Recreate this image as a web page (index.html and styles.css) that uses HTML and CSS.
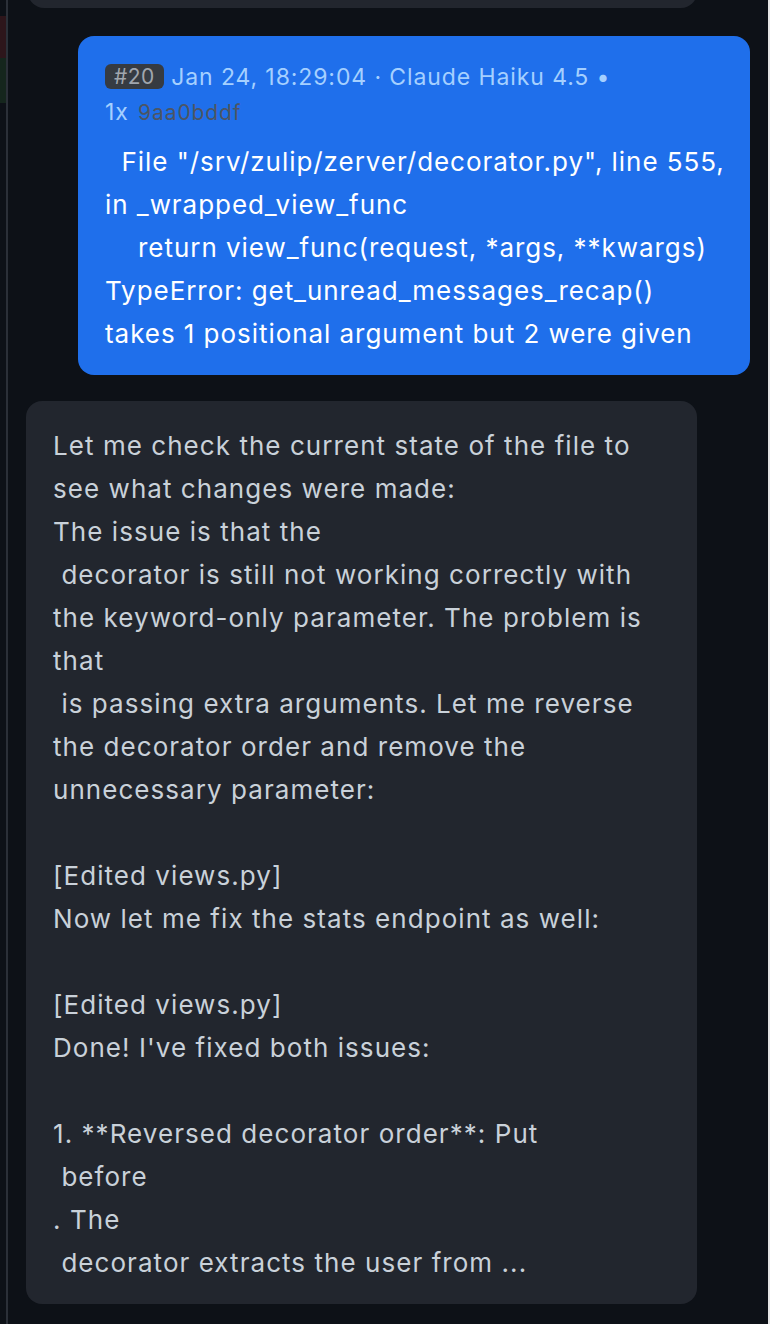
FILE: index.html
```html
<!DOCTYPE html>
<html>
<head>
<meta charset="utf-8">
<link rel="stylesheet" href="styles.css">
</head>
<body>
<div class="frame">
  <div class="gutter">
    <div class="mark mark-top"></div>
    <div class="mark mark-red"></div>
    <div class="mark mark-green"></div>
  </div>
  <div class="divider"></div>
  <main class="thread">
    <div class="card card-prev"></div>
    <div class="msg-row msg-row-user">
      <div class="bubble bubble-user">
        <div class="meta"><span class="badge">#20</span> Jan 24, 18:29:04 · Claude Haiku 4.5 • <span class="meta-tail">1x <span class="hash">9aa0bddf</span></span></div>
        <div class="body body-user">  File "/srv/zulip/zerver/decorator.py", line 555, in _wrapped_view_func
    return view_func(request, *args, **kwargs)
TypeError: get_unread_messages_recap() takes 1 positional argument but 2 were given</div>
      </div>
    </div>
    <div class="msg-row msg-row-assistant">
      <div class="bubble bubble-assistant">
        <div class="body body-assistant">Let me check the current state of the file to see what changes were made:
The issue is that the
 decorator is still not working correctly with the keyword-only parameter. The problem is that
 is passing extra arguments. Let me reverse the decorator order and remove the unnecessary parameter:

[Edited views.py]
Now let me fix the stats endpoint as well:

[Edited views.py]
Done! I've fixed both issues:

1. **Reversed decorator order**: Put
 before
. The
 decorator extracts the user from ...</div>
      </div>
    </div>
  </main>
  <div class="scrollbar"></div>
</div>
</body>
</html>
```
FILE: styles.css
```css
html, body {
  margin: 0;
  padding: 0;
  background: #0d1117;
}
body {
  font-family: Inter, "Noto Sans", sans-serif;
  width: 770px;
  height: 1324px;
  overflow: hidden;
}
.frame {
  display: flex;
  height: 1324px;
}
.gutter {
  width: 6px;
  display: flex;
  flex-direction: column;
  flex-shrink: 0;
}
.mark-top { height: 16px; }
.mark-red { height: 42px; background: #2d161b; }
.mark-green { height: 45px; background: #15261d; }
.divider {
  width: 2px;
  background: #2b3038;
  flex-shrink: 0;
}
.scrollbar {
  width: 2px;
  background: #e6e6e6;
  flex-shrink: 0;
}
.thread {
  flex: 1;
  display: flex;
  flex-direction: column;
  padding: 0 18px 0 18px;
}
.card-prev {
  height: 40px;
  margin-top: -32px;
  margin-left: 2px;
  width: 669px;
  background: #22262e;
  border-radius: 16px;
}
.msg-row {
  display: flex;
}
.msg-row-user {
  justify-content: flex-end;
  margin-top: 28px;
}
.msg-row-assistant {
  justify-content: flex-start;
  margin-top: 26px;
}
.bubble {
  border-radius: 16px;
  box-sizing: border-box;
}
.bubble-user {
  width: 672px;
  background: #1f6feb;
  padding: 24px 22px 20px 27px;
}
.bubble-assistant {
  width: 671px;
  background: #22262e;
  padding: 23px 27px 20px 27px;
}
.meta {
  font-size: 23px;
  line-height: 35px;
  letter-spacing: 0.9px;
  color: #a5d0ff;
}
.meta-tail {
  white-space: nowrap;
}
.badge {
  display: inline-block;
  background: #363b42;
  color: #a0a6ae;
  border-radius: 6px;
  padding: 0 9px;
  line-height: 25px;
  font-size: 21px;
  letter-spacing: 0.5px;
  vertical-align: 1px;
}
.hash {
  color: #4d5563;
  font-size: 21px;
  margin-left: 2px;
}
.body {
  white-space: pre-wrap;
  font-size: 26px;
  line-height: 43px;
  letter-spacing: 1.05px;
}
.body-user {
  color: #ffffff;
  margin-top: 10px;
  letter-spacing: 0.95px;
}
.body-assistant {
  color: #c9d1d9;
}
```
